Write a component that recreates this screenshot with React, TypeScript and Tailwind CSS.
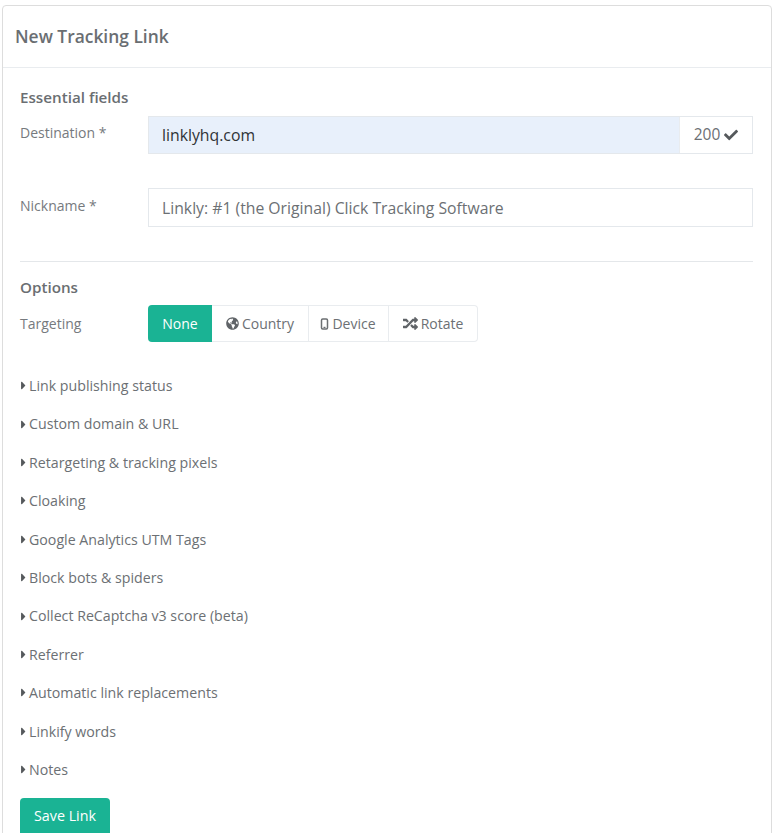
import { FaCaretRight, FaCheck, FaGlobeAmericas, FaRandom } from "react-icons/fa";

const SECTIONS = [
  "Link publishing status",
  "Custom domain & URL",
  "Retargeting & tracking pixels",
  "Cloaking",
  "Google Analytics UTM Tags",
  "Block bots & spiders",
  "Collect ReCaptcha v3 score (beta)",
  "Referrer",
  "Automatic link replacements",
  "Linkify words",
  "Notes",
];

function DeviceIcon() {
  return (
    <svg width="9" height="12" viewBox="0 0 9 12" fill="none" className="mr-[3px] ml-[-1px]">
      <rect x="1.5" y="1" width="6" height="10" rx="1.2" stroke="#6b6f72" strokeWidth="1.5" />
      <rect x="3.5" y="8.8" width="2" height="1.2" fill="#6b6f72" />
    </svg>
  );
}

function SectionToggle({ label }: { label: string }) {
  return (
    <div className="flex h-[38.4px] items-center pb-[1px] text-[14.2px] text-[#6c7074]">
      <FaCaretRight className="mr-[-1px] ml-[-3px] text-[13px] text-[#55595c]" />
      {label}
    </div>
  );
}

export default function App() {
  return (
    <div className="h-[833px] overflow-hidden bg-white pt-[5px] pl-[2px] pr-[5px] font-['Open_Sans',sans-serif]">
      <div className="h-[900px] rounded-[4px] border border-[#dddddd] bg-white">
        <div className="flex h-[62px] items-center border-b border-[#e9ecef] px-[12px] pb-[1px] text-[17.4px] font-semibold text-[#6a6e72]">
          New Tracking Link
        </div>

        <div className="pr-[18px] pl-[17px]">
          <div className="mt-[19px] h-[20px] text-[15.2px] leading-[20px] font-semibold text-[#6a6e72]">
            Essential fields
          </div>

          <div className="mt-[9px] flex h-[38px]">
            <div className="w-[128px] pt-[7px] text-[14px] leading-[20px] text-[#767a7e]">Destination *</div>
            <div className="flex flex-1 border border-[#e4e8ec]">
              <div className="flex flex-1 items-center bg-[#e8f0fb] pt-[1px] pl-[13px] text-[15.8px] text-[#2f3336]">
                linklyhq.com
              </div>
              <div className="flex w-[73px] items-center justify-center gap-[4px] border-l border-[#e9ecef] text-[15.5px] text-[#6c7074]">
                200
                <FaCheck className="text-[14px] text-[#55595c]" />
              </div>
            </div>
          </div>

          <div className="mt-[34px] flex h-[39px]">
            <div className="w-[128px] pt-[8px] text-[14px] leading-[20px] text-[#767a7e]">Nickname *</div>
            <div className="flex flex-1 items-center border border-[#e4e8ec] pt-[2px] pl-[13px] text-[15.75px] text-[#6c7074]">
              Linkly: #1 (the Original) Click Tracking Software
            </div>
          </div>

          <div className="mt-[34px] border-t border-[#e4e7ea]" />

          <div className="mt-[15px] h-[20px] text-[15.2px] leading-[20px] font-semibold text-[#6a6e72]">Options</div>

          <div className="mt-[8px] flex h-[37px] items-center">
            <div className="w-[128px] text-[14px] text-[#767a7e]">Targeting</div>
            <div className="flex h-full text-[14px] text-[#6c7074]">
              <div className="flex w-[64px] items-center justify-center rounded-l-[4px] bg-[#1ab394] text-white">None</div>
              <div className="flex w-[97px] items-center justify-center gap-[3px] border-y border-r border-[#e9ecef]">
                <FaGlobeAmericas className="text-[13px] text-[#606468]" />
                Country
              </div>
              <div className="flex w-[80px] items-center justify-center border-y border-r border-[#e9ecef]">
                <DeviceIcon />
                Device
              </div>
              <div className="flex w-[89px] items-center justify-center gap-[3px] rounded-r-[4px] border-y border-r border-[#e9ecef]">
                <FaRandom className="text-[15px] text-[#606468]" />
                Rotate
              </div>
            </div>
          </div>

          <div className="mt-[25px]">
            {SECTIONS.map((label) => (
              <SectionToggle key={label} label={label} />
            ))}
          </div>

          <button className="mt-[9px] flex h-[38px] w-[90px] items-center justify-center rounded-[4px] bg-[#1ab394] pb-[3px] text-[14.3px] text-white">
            Save Link
          </button>
        </div>
      </div>
    </div>
  );
}
